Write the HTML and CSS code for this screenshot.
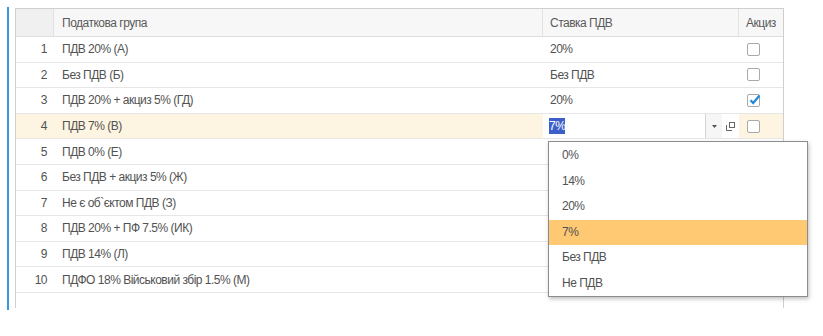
FILE: index.html
```html
<!DOCTYPE html>
<html lang="uk">
<head>
    <meta charset="UTF-8">
    <title>Податкові групи</title>
    <link rel="stylesheet" href="styles.css">
</head>
<body>
    <div class="page">
        <div class="accent"></div>
        <div class="grid-wrap">
            <div class="row head">
                <div class="cell num"></div>
                <div class="cell">Податкова група</div>
                <div class="cell">Ставка ПДВ</div>
                <div class="cell">Акциз</div>
            </div>
            <div class="row">
                <div class="cell num">1</div>
                <div class="cell">ПДВ 20% (А)</div>
                <div class="cell">20%</div>
                <div class="cell"><span class="check"></span></div>
            </div>
            <div class="row">
                <div class="cell num">2</div>
                <div class="cell">Без ПДВ (Б)</div>
                <div class="cell">Без ПДВ</div>
                <div class="cell"><span class="check"></span></div>
            </div>
            <div class="row">
                <div class="cell num">3</div>
                <div class="cell">ПДВ 20% + акциз 5% (ГД)</div>
                <div class="cell">20%</div>
                <div class="cell">
                    <span class="check">
                        <svg width="13" height="12" viewBox="0 0 13 12"><path d="M2.5 6.2 L5.2 9 L11.5 1.5" fill="none" stroke="#1f8ad8" stroke-width="2.2"/></svg>
                    </span>
                </div>
            </div>
            <div class="row current">
                <div class="cell num">4</div>
                <div class="cell">ПДВ 7% (В)</div>
                <div class="cell edit">
                    <div class="field"><span class="selected">7%</span></div>
                    <div class="drop-btn">
                        <svg width="5" height="3" viewBox="0 0 5 3"><path d="M0 0 H5 L2.5 3 Z" fill="#555"/></svg>
                    </div>
                    <div class="open-btn">
                        <svg width="9" height="9" viewBox="0 0 9 9"><rect x="3.5" y="0.5" width="5" height="5" fill="none" stroke="#666"/><path d="M0.5 3 V8.5 H6" fill="none" stroke="#666"/></svg>
                    </div>
                </div>
                <div class="cell"><span class="check"></span></div>
            </div>
            <div class="row">
                <div class="cell num">5</div>
                <div class="cell">ПДВ 0% (Е)</div>
                <div class="cell"></div>
                <div class="cell"></div>
            </div>
            <div class="row">
                <div class="cell num">6</div>
                <div class="cell">Без ПДВ + акциз 5% (Ж)</div>
                <div class="cell"></div>
                <div class="cell"></div>
            </div>
            <div class="row">
                <div class="cell num">7</div>
                <div class="cell">Не є об`єктом ПДВ (З)</div>
                <div class="cell"></div>
                <div class="cell"></div>
            </div>
            <div class="row">
                <div class="cell num">8</div>
                <div class="cell">ПДВ 20% + ПФ 7.5% (ИК)</div>
                <div class="cell"></div>
                <div class="cell"></div>
            </div>
            <div class="row">
                <div class="cell num">9</div>
                <div class="cell">ПДВ 14% (Л)</div>
                <div class="cell"></div>
                <div class="cell"></div>
            </div>
            <div class="row">
                <div class="cell num">10</div>
                <div class="cell">ПДФО 18% Військовий збір 1.5% (М)</div>
                <div class="cell"></div>
                <div class="cell"></div>
            </div>

            <ul class="dropdown">
                <li>0%</li>
                <li>14%</li>
                <li>20%</li>
                <li class="active">7%</li>
                <li>Без ПДВ</li>
                <li>Не ПДВ</li>
            </ul>
        </div>
    </div>
</body>
</html>
```

FILE: styles.css
```css
body {
    margin: 0;
    background: #ffffff;
    font-family: "Liberation Sans", Arial, sans-serif;
    font-size: 12px;
    letter-spacing: -0.5px;
    color: #525252;
}

.page {
    display: flex;
    padding: 7px 0 0 7px;
}

.accent {
    width: 2px;
    height: 303px;
    background: #3a9ad9;
    margin-right: 6px;
}

.grid-wrap {
    position: relative;
    width: 767px;
    height: 299px;
    margin-top: 1px;
    border: 1px solid #cfcfcf;
    border-bottom: none;
}

.row {
    display: grid;
    grid-template-columns: 38px 489px 196px 44px;
    height: 25.6px;
    border-bottom: 1px solid #e6e6e6;
    box-sizing: border-box;
}

.row.head {
    height: 28px;
    background: #f7f7f7;
    border-bottom: 1px solid #dedede;
    color: #5a5a5a;
}

.row.head .cell {
    border-right: 1px solid #e2e2e2;
}

.row.head .cell:last-child {
    border-right: none;
}

.row.head .num {
    background: #f0f0f0;
}

.cell {
    display: flex;
    align-items: center;
    padding-left: 7px;
    overflow: hidden;
    white-space: nowrap;
}

.cell.num {
    justify-content: flex-end;
    padding: 0 7px 0 0;
}

.row .cell:nth-child(2) {
    padding-left: 8px;
}

.row.current {
    background: #fdf5e1;
}

.cell.edit {
    padding: 0;
    align-items: stretch;
}

.field {
    flex: 1;
    background: #ffffff;
    display: flex;
    align-items: center;
    padding-left: 6px;
}

.selected {
    background: #3d5fc9;
    color: #ffffff;
    padding: 1px 0;
}

.drop-btn {
    width: 16px;
    background: #f6f6f6;
    border-left: 1px solid #d4d4d4;
    display: flex;
    align-items: center;
    justify-content: center;
}

.open-btn {
    width: 17px;
    background: #ffffff;
    display: flex;
    align-items: center;
    justify-content: center;
}

.check {
    width: 11px;
    height: 11px;
    border: 1px solid #a9a9a9;
    border-radius: 2px;
    background: #ffffff;
    margin-left: 1px;
    position: relative;
}

.check svg {
    position: absolute;
    left: 0;
    top: -1px;
}

.dropdown {
    position: absolute;
    left: 532px;
    top: 132px;
    width: 258px;
    margin: 0;
    padding: 1px 0 0;
    list-style: none;
    background: #ffffff;
    border: 1px solid #8c8c8c;
    box-shadow: 1px 2px 4px rgba(0, 0, 0, 0.25);
}

.dropdown li {
    height: 25.5px;
    line-height: 25.5px;
    padding-left: 13px;
}

.dropdown li.active {
    background: #ffc872;
}
```
